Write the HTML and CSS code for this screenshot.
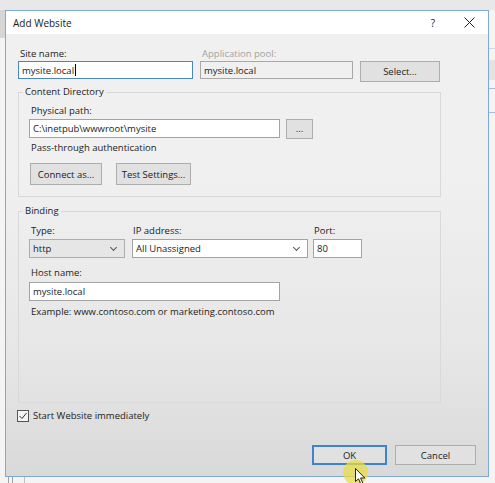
FILE: index.html
```html
<!DOCTYPE html>
<html lang="en">
  <head>
    <meta charset="UTF-8" />
    <title>Add Website</title>
    <link rel="stylesheet" href="styles.css">
  </head>
  <body>
    <div class="dialog">
      <div class="titlebar">
        <span class="title">Add Website</span>
        <span class="help">?</span>
        <svg class="close" width="11" height="11" viewBox="0 0 11 11">
          <path d="M0.5 0.5 L10.5 10.5 M10.5 0.5 L0.5 10.5" stroke="#222" stroke-width="1" fill="none" />
        </svg>
      </div>

      <div class="content">
        <div class="site-row">
          <label class="lbl">Site name:</label>
          <label class="lbl disabled">Application pool:</label>
          <span></span>
          <div class="input focus">mysite.local<span class="caret"></span></div>
          <div class="input readonly">mysite.local</div>
          <button class="btn select">Select...</button>
        </div>

        <fieldset class="group content-dir">
          <legend>Content Directory</legend>
          <label class="lbl">Physical path:</label>
          <div class="path-row">
            <div class="input path">C:\inetpub\wwwroot\mysite</div>
            <button class="btn browse">...</button>
          </div>
          <div class="note">Pass-through authentication</div>
          <div class="btn-row">
            <button class="btn connect">Connect as...</button>
            <button class="btn test">Test Settings...</button>
          </div>
        </fieldset>

        <fieldset class="group binding">
          <legend>Binding</legend>
          <div class="binding-row">
            <div class="col type">
              <label class="lbl">Type:</label>
              <div class="combo grey">http<span class="chev"></span></div>
            </div>
            <div class="col ip">
              <label class="lbl tight">IP address:</label>
              <div class="combo">All Unassigned<span class="chev"></span></div>
            </div>
            <div class="col port">
              <label class="lbl tight">Port:</label>
              <div class="input">80</div>
            </div>
          </div>
          <label class="lbl host-lbl">Host name:</label>
          <div class="input path host">mysite.local</div>
          <div class="note example">Example: www.contoso.com or marketing.contoso.com</div>
        </fieldset>

        <div class="check-row">
          <span class="checkbox">
            <svg width="10" height="10" viewBox="0 0 10 10">
              <path d="M1.5 5 L4 7.5 L8.5 2" stroke="#333" stroke-width="1" fill="none" />
            </svg>
          </span>
          <span>Start Website immediately</span>
        </div>

        <div class="actions">
          <button class="btn ok">OK</button>
          <button class="btn cancel">Cancel</button>
        </div>
      </div>
    </div>

    <div class="glow"></div>
    <svg class="pointer" width="12" height="18" viewBox="0 0 12 18">
      <path d="M0.5 0.5 L0.5 13.5 L3.5 10.8 L5.8 16 L7.8 15.1 L5.6 10 L9.8 10 Z" fill="#fff" stroke="#222" stroke-width="1" />
    </svg>
  </body>
</html>
```

FILE: styles.css
```css
body {
  margin: 0;
  width: 495px;
  height: 483px;
  overflow: hidden;
  position: relative;
  font-family: "Open Sans", "Noto Sans", sans-serif;
  font-size: 9.5px;
  color: #1b1b1b;
  background:
    linear-gradient(#e8e8e8, #e8e8e8) 0 0 / 100% 10px no-repeat,
    linear-gradient(#d6d6d6, #d6d6d6) 0 10px / 5px 28px no-repeat,
    linear-gradient(#c9d9ea, #c9d9ea) 489px 48px / 6px 1px no-repeat,
    linear-gradient(#e3e3e3, #e3e3e3) 489px 60px / 6px 20px no-repeat,
    linear-gradient(#9fc0e2, #9fc0e2) 489px 88px / 6px 1px no-repeat,
    linear-gradient(#9fc0e2, #9fc0e2) 489px 112px / 6px 1px no-repeat,
    linear-gradient(#a0a0a0, #a0a0a0) 8px 477px / 1px 6px no-repeat,
    linear-gradient(#a0a0a0, #a0a0a0) 12px 477px / 1px 6px no-repeat,
    linear-gradient(#c0c0c0, #c0c0c0) 24px 477px / 1px 6px no-repeat,
    #f4f4f4;
}
.dialog {
  margin: 10px 0 0 5px;
  width: 484px;
  height: 467px;
  box-sizing: border-box;
  border: 1px solid #7ea9d6;
  background: linear-gradient(#f0f0f0 35%, #e6e6e6 75%, #d9d9d9);
  display: flex;
  flex-direction: column;
}
.titlebar {
  height: 23px;
  background: #fff;
  display: flex;
  align-items: center;
  padding-left: 7px;
  font-size: 10px;
}
.title {
  flex: 1;
}
.help {
  margin-right: 29px;
}
.close {
  margin-right: 13px;
}
.content {
  flex: 1;
  padding: 13px 12px 11px 12px;
  display: flex;
  flex-direction: column;
}
.lbl {
  display: block;
  line-height: 14px;
  padding-left: 2px;
}
.lbl.tight {
  padding-left: 1px;
}
.lbl.disabled {
  color: #a2a2a2;
}
.input,
.combo {
  box-sizing: border-box;
  height: 19px;
  line-height: 17px;
  border: 1px solid #a3a3a3;
  background: #fff;
  padding-left: 3px;
  white-space: nowrap;
  position: relative;
}
.input.focus {
  border-color: #4a86c3;
}
.input.readonly {
  background: #f0f0f0;
  border-color: #a8a8a8;
}
.caret {
  display: inline-block;
  width: 1px;
  height: 12px;
  background: #000;
  vertical-align: -2px;
  margin-left: 1px;
}
.btn {
  box-sizing: border-box;
  font: inherit;
  color: inherit;
  background: #e1e1e1;
  border: 1px solid #adadad;
  padding: 0;
  margin: 0;
}

.site-row {
  display: grid;
  grid-template-columns: 175px 153px 80px;
  column-gap: 7px;
  row-gap: 0;
  align-items: start;
}
.site-row .input {
  height: 18px;
}
.btn.select {
  height: 21px;
}

.group {
  width: 423px;
  box-sizing: border-box;
  margin: 3px 0 0 0;
  padding: 5px 10px 11px 10px;
  border: 1px solid #d9d9d9;
  min-width: 0;
}
.group legend {
  padding: 0 2px;
  margin-left: -6px;
  line-height: 14px;
}
.path-row {
  display: flex;
  gap: 6px;
  margin-top: 1px;
  align-items: flex-start;
}
.input.path {
  width: 251px;
}
.btn.browse {
  width: 27px;
  height: 20px;
  line-height: 14px;
}
.note {
  margin-top: 2px;
  line-height: 14px;
  padding-left: 2px;
}
.btn-row {
  display: flex;
  gap: 14px;
  margin-top: 8px;
  margin-left: 1px;
}
.btn-row .btn {
  height: 22px;
}
.btn.connect {
  width: 72px;
}
.btn.test {
  width: 75px;
}

.binding {
  margin-top: 7px;
  padding-top: 6px;
  padding-bottom: 83px;
}
.binding-row {
  display: flex;
}
.col .input,
.col .combo {
  margin-top: 1px;
}
.col.type {
  width: 96px;
}
.col.ip {
  width: 176px;
  margin-left: 7px;
}
.col.port {
  width: 49px;
  margin-left: 5px;
}
.combo.grey {
  background: #e6e6e6;
  border-color: #adadad;
}
.chev {
  position: absolute;
  right: 8px;
  top: 5px;
  width: 4px;
  height: 4px;
  border-right: 1px solid #555;
  border-bottom: 1px solid #555;
  transform: rotate(45deg);
}
.host-lbl {
  margin-top: 8px;
}
.input.host {
  margin-top: 2px;
}
.example {
  margin-top: 4px;
}

.check-row {
  display: flex;
  align-items: center;
  gap: 4px;
  margin-top: 6px;
  margin-left: -1px;
  line-height: 14px;
}
.checkbox {
  box-sizing: border-box;
  width: 12px;
  height: 12px;
  border: 1px solid #555;
  background: #f4f4f4;
  display: flex;
  align-items: center;
  justify-content: center;
}
.actions {
  margin-top: auto;
  display: flex;
  justify-content: flex-end;
  gap: 8px;
}
.actions .btn {
  height: 20px;
}
.btn.ok {
  width: 75px;
  border: 2px solid #3f83cc;
}
.btn.cancel {
  width: 81px;
}

.glow {
  position: absolute;
  left: 343px;
  top: 460px;
  width: 25px;
  height: 25px;
  border-radius: 50%;
  background: rgba(232, 220, 70, 0.75);
}
.pointer {
  position: absolute;
  left: 355px;
  top: 468px;
}
```
